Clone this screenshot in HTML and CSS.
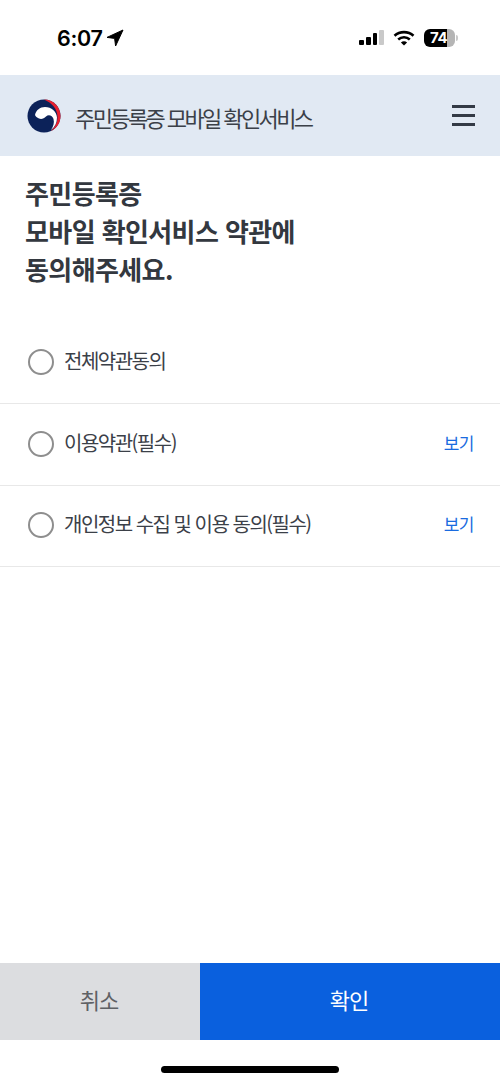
FILE: index.html
```html
<!DOCTYPE html>
<html lang="ko">
<head>
    <meta charset="UTF-8">
    <meta name="viewport" content="width=device-width, initial-scale=1.0">
    <title>주민등록증 모바일 확인서비스</title>
    <link rel="stylesheet" href="styles.css">
</head>
<body>
    <div class="page">
        <div class="status-bar">
            <div class="status-left">
                <span class="time">6:07</span>
                <svg class="location" viewBox="0 0 18 18" width="18" height="18"><path d="M17 1 L1 8.4 L8.6 9.4 L9.6 17 Z" fill="#000" stroke="#000" stroke-width="1" stroke-linejoin="round"/></svg>
            </div>
            <div class="status-right">
                <div class="signal">
                    <span class="bar bar-1"></span>
                    <span class="bar bar-2"></span>
                    <span class="bar bar-3"></span>
                    <span class="bar bar-4"></span>
                </div>
                <svg class="wifi" viewBox="0 0 22 16" width="22" height="16">
                    <path d="M1.5 5.8 C6.8 .9 15.2 .9 20.5 5.8" fill="none" stroke="#000" stroke-width="2.6"/>
                    <path d="M5.2 9.4 C8.5 6.5 13.5 6.5 16.8 9.4" fill="none" stroke="#000" stroke-width="2.6"/>
                    <path d="M11 15.6 L7.9 12.4 C9.7 10.9 12.3 10.9 14.1 12.4 Z" fill="#000"/>
                </svg>
                <div class="battery">
                    <div class="battery-body"><span class="battery-level">74</span></div>
                    <span class="battery-cap"></span>
                </div>
            </div>
        </div>

        <header class="app-header">
            <div class="brand">
                <svg class="logo" viewBox="0 0 34 34" width="34" height="34">
                    <circle cx="17" cy="17" r="16.5" fill="#0c2259"/>
                    <path d="M17 .5 C26.5 .5 33.5 8 33.5 17 C33.5 24 29.5 29.5 24 32 C28 28 30.5 23.5 30.5 18 C30.500 10 25 4 17 .5 Z" fill="#e8202f"/>
                    <path d="M8 16 C9 11 13 8 18 8 C24.5 8 29.5 12.5 30 18.5 C30 23.5 28 28 24 31 C26.5 27.5 27.5 23.5 26.5 20 C25.5 16.5 21.5 15 19 17.5 C17 19.5 14.5 20.5 12 19.5 C10 18.500 8.500 17.500 8 16 Z" fill="#fff"/>
                </svg>
                <span class="brand-title">주민등록증 모바일 확인서비스</span>
            </div>
            <div class="menu-btn">
                <span></span>
                <span></span>
                <span></span>
            </div>
        </header>

        <h1 class="page-title">주민등록증<br>모바일 확인서비스 약관에<br>동의해주세요.</h1>

        <ul class="terms">
            <li class="term-row">
                <span class="radio"></span>
                <span class="term-label">전체약관동의</span>
            </li>
            <li class="term-row">
                <span class="radio"></span>
                <span class="term-label">이용약관(필수)</span>
                <a class="term-link">보기</a>
            </li>
            <li class="term-row">
                <span class="radio"></span>
                <span class="term-label">개인정보 수집 및 이용 동의(필수)</span>
                <a class="term-link">보기</a>
            </li>
        </ul>

        <div class="actions">
            <button class="btn btn-cancel">취소</button>
            <button class="btn btn-confirm">확인</button>
        </div>
        <div class="home-area">
            <span class="home-indicator"></span>
        </div>
    </div>
</body>
</html>
```
FILE: styles.css
```css
* {
    box-sizing: border-box;
}

body {
    margin: 0;
    font-family: "Noto Sans CJK KR", "Noto Sans", sans-serif;
    background-color: #fff;
    color: #33383f;
}

.page {
    display: flex;
    flex-direction: column;
    height: 1083px;
    overflow: hidden;
}

/* status bar */
.status-bar {
    display: flex;
    justify-content: space-between;
    align-items: center;
    height: 75px;
    padding: 0 42px 0 57px;
}

.status-left {
    display: flex;
    align-items: center;
    gap: 3px;
}

.time {
    font-family: Inter, sans-serif;
    font-size: 21.5px;
    font-weight: 600;
    color: #000;
    letter-spacing: -0.3px;
}

.status-right {
    display: flex;
    align-items: center;
    gap: 9px;
}

.signal {
    display: flex;
    align-items: flex-end;
    gap: 1.8px;
    height: 15px;
}

.bar {
    width: 4.8px;
    background-color: #000;
    border-radius: 1px;
}

.bar-1 { height: 5px; }
.bar-2 { height: 8px; }
.bar-3 { height: 12px; }
.bar-4 { height: 15px; background-color: #c9c9c9; }

.battery {
    display: flex;
    align-items: center;
    gap: 1px;
}

.battery-body {
    width: 31px;
    height: 18px;
    border-radius: 6px;
    background: linear-gradient(90deg, #000 74%, #b5b5b5 74%);
    display: flex;
    align-items: center;
    padding-left: 6px;
}

.battery-level {
    font-family: Inter, sans-serif;
    font-size: 15px;
    font-weight: 700;
    letter-spacing: -0.3px;
    color: #fff;
}

.battery-cap {
    width: 2px;
    height: 6px;
    background-color: #c9c9c9;
    border-radius: 0 2px 2px 0;
}

/* header */
.app-header {
    display: flex;
    justify-content: space-between;
    align-items: center;
    height: 81px;
    padding: 0 25px 0 27px;
    background-color: #e1e9f3;
}

.brand {
    display: flex;
    align-items: center;
    gap: 14px;
}

.brand-title {
    font-size: 22px;
    letter-spacing: -2.6px;
    color: #3b4048;
    margin-top: 3px;
}

.menu-btn {
    display: flex;
    flex-direction: column;
    gap: 6.5px;
    width: 23px;
}

.menu-btn span {
    height: 2.5px;
    background-color: #333a45;
}

/* title */
.page-title {
    margin: 18px 0 35px;
    padding-left: 25px;
    font-size: 26px;
    font-weight: 700;
    line-height: 38px;
    letter-spacing: -0.6px;
    color: #33383f;
}

/* terms list */
.terms {
    list-style: none;
    margin: 0;
    padding: 0;
}

.term-row {
    display: flex;
    align-items: center;
    gap: 10px;
    height: 81.4px;
    padding: 0 26px 0 28px;
    border-bottom: 1px solid #e8e8e8;
}

.radio {
    width: 26px;
    height: 26px;
    border: 2px solid #8e8e8e;
    border-radius: 50%;
    margin-top: -2px;
}

.term-label {
    flex: 1;
    font-size: 20px;
    letter-spacing: -1.5px;
    color: #3b4048;
    margin-top: -5px;
}

.term-link {
    font-size: 17px;
    letter-spacing: -0.5px;
    color: #1a6be0;
    margin-top: -5px;
}

/* bottom buttons */
.actions {
    display: flex;
    margin-top: auto;
    height: 77px;
}

.btn {
    border: none;
    font-family: inherit;
    font-size: 22px;
    letter-spacing: -1px;
    padding: 0 2px 6px 0;
}

.btn-cancel {
    width: 200px;
    background-color: #dcdde0;
    color: #5f6165;
}

.btn-confirm {
    flex: 1;
    background-color: #0a60de;
    color: #fff;
}

.home-area {
    display: flex;
    justify-content: center;
    height: 43px;
    padding-top: 26px;
}

.home-indicator {
    width: 178px;
    height: 7px;
    background-color: #000;
    border-radius: 4px;
}
```
